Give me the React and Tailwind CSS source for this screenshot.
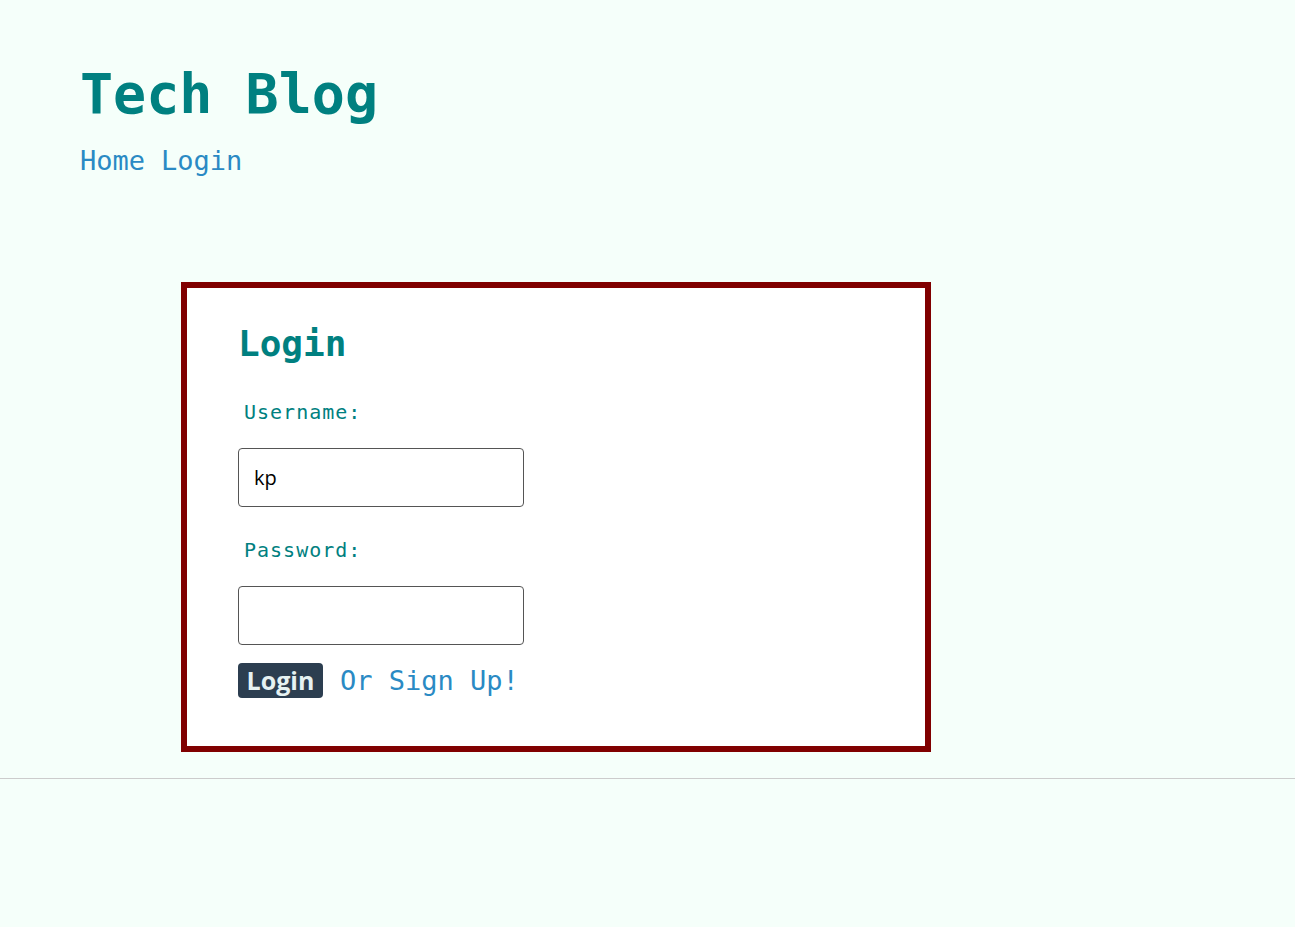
export default function App() {
  const mono = { fontFamily: '"DejaVu Sans Mono", "Liberation Mono", monospace' };
  return (
    <div className="min-h-[927px] bg-[#f5fffa]" style={mono}>
      <header className="pl-[80px] pt-[62px]">
        <h1 className="text-[55px] leading-[64px] font-bold text-[#008080]">Tech Blog</h1>
        <nav className="mt-[19px] flex gap-[16px] text-[27px] leading-[32px] text-[#2a8ac4]">
          <a href="#">Home</a>
          <a href="#">Login</a>
        </nav>
      </header>
      <main className="mt-[105px] ml-[181px] w-[750px] h-[470px] border-[6px] border-[#800000] bg-white pl-[51px] pt-[35px]">
        <h2 className="text-[36px] leading-[42px] font-bold text-[#008080]">Login</h2>
        <form className="flex flex-col" onSubmit={(e) => e.preventDefault()}>
          <label className="mt-[35px] ml-[6px] text-[20px] leading-[24px] tracking-[1px] text-[#008080]">Username:</label>
          <input
            defaultValue="kp"
            className="mt-[24px] w-[286px] h-[59px] rounded-[4px] border border-[#555] bg-white px-[15px] text-[20px] text-black outline-none"
            style={{ fontFamily: '"Open Sans", "Noto Sans", sans-serif' }}
          />
          <label className="mt-[31px] ml-[6px] text-[20px] leading-[24px] tracking-[1px] text-[#008080]">Password:</label>
          <input
            type="password"
            className="mt-[24px] w-[286px] h-[59px] rounded-[4px] border border-[#555] bg-white px-[15px] text-[20px] text-black outline-none"
          />
          <div className="mt-[18px] flex items-center gap-[17px]">
            <button
              className="w-[85px] h-[35px] rounded-[4px] bg-[#2c3e50] text-[#e6f2f2] text-[25px] font-bold leading-none flex items-center justify-center"
              style={{ fontFamily: '"Open Sans", "Noto Sans", sans-serif' }}
            >
              Login
            </button>
            <a href="#" className="text-[27px] leading-[32px] text-[#2a8ac4]">Or Sign Up!</a>
          </div>
        </form>
      </main>
      <hr className="mt-[26px] border-0 border-t border-[#cccccc]" />
    </div>
  );
}
